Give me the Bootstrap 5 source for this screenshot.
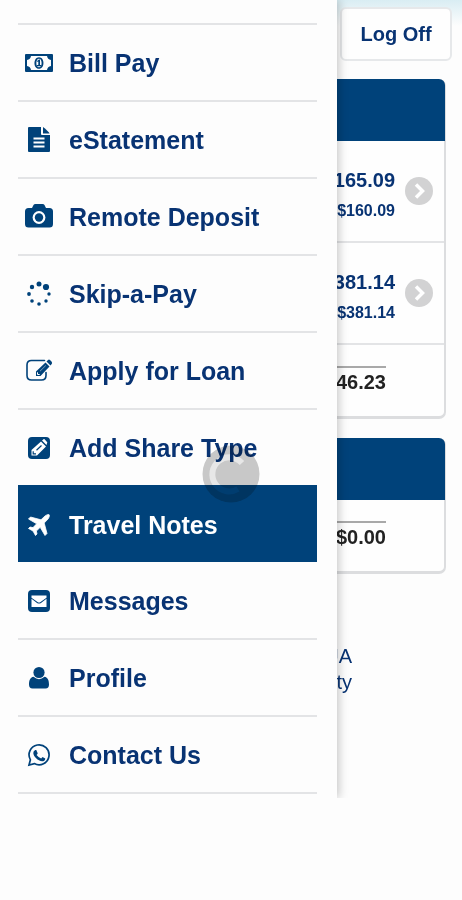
<!DOCTYPE html>
<html lang="en">
<head>
<meta charset="utf-8">
<meta name="viewport" content="width=device-width, initial-scale=1">
<title>Mobile Banking Menu</title>
<link rel="stylesheet" href="https://cdn.jsdelivr.net/npm/bootstrap@5.3.0/dist/css/bootstrap.min.css">
<style>
:root { --navy: #00427a; --ink: #083373; --line: #e3e4e6; }
body { background: #fdfdfd; color: var(--ink); font-family: "Liberation Sans", Arial, sans-serif; overflow-x: hidden; }
.drawer { width: 73%; z-index: 2; background: #fdfdfd; box-shadow: 2px 0 9px rgba(0,0,0,.22); clip-path: inset(0 -14px 0 0); padding: 23px 20px 4px 18px; }
.menu-link { height: 77px; padding: 0 8px 0 7px; gap: 16px; border-top: 2px solid var(--line); color: var(--ink); font-size: 25px; line-height: 30px; font-weight: 700; text-decoration: none; white-space: nowrap; }
.menu-link svg { width: 28px; height: 28px; flex: none; fill: var(--navy); color: var(--navy); overflow: visible; }
.menu-link.active { background: var(--navy); border-color: var(--navy); color: #fff; }
.menu-link.active svg { fill: #fff; }
.after-active { height: 76px; border-top-color: transparent; }
.menu-end { border-bottom: 2px solid var(--line); }
.account-pane { min-width: 0; background: linear-gradient(#d9edf3, #fdfdfd 26px); }
.logoff { height: 54px; margin: 7px 10px 18px 3px; border: 2px solid #e6e8ea; background: #fefefe; color: var(--ink); font-size: 20px; font-weight: 700; border-radius: 6px; padding: 0; }
.account-card { margin-right: 16px; margin-bottom: 19px; border: 2px solid #dcdddf; border-width: 0 2px 3px 0; border-radius: 0 7px 7px 0; background: #fefefe; }
.card-band { height: 62px; background: var(--navy); border-radius: 0 6px 0 0; margin-right: -1px; }
.account-row { height: 102px; padding-right: 11px; gap: 10px; border-bottom: 2px solid var(--line); color: var(--ink); text-decoration: none; font-weight: 700; }
.account-row svg { width: 28px; height: 28px; flex: none; }
.amounts { padding-top: 8px; }
.balance { font-size: 20px; line-height: 32px; }
.available { font-size: 16px; line-height: 30px; }
.total-area { height: 71px; padding-top: 21px; }
.total { margin-right: 58px; border-top: 2px solid #a9a9a9; color: #222; font-size: 20px; line-height: 28px; font-weight: 700; }
.legal { padding: 50px 110px 0 0; font-size: 20px; line-height: 26px; }
.spinner-disc { width: 58px; height: 58px; left: 50%; top: 474px; transform: translate(-50%, -50%); z-index: 3; pointer-events: none; mix-blend-mode: multiply; }
</style>
<script src="https://cdn.jsdelivr.net/npm/bootstrap@5.3.0/dist/js/bootstrap.bundle.min.js"></script>
</head>
<body>
<div class="d-flex align-items-start position-relative">
  <nav class="drawer position-relative flex-shrink-0" aria-label="Main menu">
    <div class="menu-end d-flex flex-column">
      <a href="#" class="menu-link d-flex align-items-center">
        <svg viewBox="-14 -14 28 28" aria-hidden="true"><path fill-rule="evenodd" d="M-13-9H13Q14-9 14-8V8Q14 9 13 9H-13Q-14 9-14 8V-8Q-14-9-13-9ZM-8-7Q-8.500-3.500-12-3V3Q-8.500 3.500-8 7H8Q8.500 3.500 12 3V-3Q8.500-3.500 8-7Z"/><path fill-rule="evenodd" d="M0-5.800C6-5.800 6 5.800 0 5.800S-6-5.800 0-5.800ZM0-4.300C-3.500-4.300-3.500 4.300 0 4.300S3.500-4.300 0-4.300Z"/><path d="M-2-2 0-3.500H1V2H2V3.300H-2V2H-.7V-1.500L-1.500-1Z"/></svg>Bill Pay</a>
      <a href="#" class="menu-link d-flex align-items-center">
        <svg viewBox="-14 -14 28 28" aria-hidden="true"><path d="M-10-13H2V-6Q2-5 3-5H11V11Q11 12 10 12H-10Q-11 12-11 11V-12Q-11-13-10-13ZM4-13Q5-12.500 6-11.500L10-7.500 10.500-6.500H4Z"/><path d="M-5.500-1.500H5.500M-5.500 2.500H5.500M-5.500 6.500H5.500" stroke="#fff" stroke-width="1.800"/></svg>eStatement</a>
      <a href="#" class="menu-link d-flex align-items-center">
        <svg viewBox="-14 -14 28 28" aria-hidden="true"><path d="M-10.500-9H-7L-5.500-12Q-5-13-3.500-13H3.500Q5-13 5.500-12L7-9H10.500Q14-9 14-5.500V7Q14 10.500 10.500 10.500H-10.500Q-14 10.500-14 7V-5.500Q-14-9-10.500-9Z"/><circle cy=".5" r="6.400" fill="#fff"/><circle cy=".5" r="4.200"/></svg>Remote Deposit</a>
      <a href="#" class="menu-link d-flex align-items-center">
        <svg viewBox="-14 -14 28 28" aria-hidden="true"><circle cy="-10" r="2.500"/><circle cx="7" cy="-7" r="3.100"/><circle cx="-7" cy="-7" r="2.200"/><circle cx="-10" r="1.900"/><circle cx="10" r="1.700"/><circle cx="-7" cy="7" r="1.800"/><circle cx="7" cy="7" r="1.700"/><circle cy="10" r="1.800"/></svg>Skip-a-Pay</a>
      <a href="#" class="menu-link d-flex align-items-center">
        <svg viewBox="-14 -14 28 28" aria-hidden="true"><path d="M5.500-10.500H-7.500Q-12-10.500-12-6V4.500Q-12 9 -7.500 9H2.500Q7 9 7 4.500V1.500" fill="none" stroke="currentColor" stroke-width="1.600" stroke-linecap="round"/><path d="M-3 5V.5L6.500-8.500 10.500-4.500 1.500 5ZM7.500-9.500 9-11Q10-11.800 11-11L12.700-9.200Q13.500-8 12.700-7L11.500-5.500Z"/><path d="M-1.500 1.300V3.500H.7" fill="none" stroke="#fff" stroke-width="1"/><path d="M1 .2 6.800-5.500" stroke="#9db4cc" stroke-width=".8"/></svg>Apply for Loan</a>
      <a href="#" class="menu-link d-flex align-items-center">
        <svg viewBox="-14 -14 28 28" aria-hidden="true"><rect x="-11" y="-11" width="22" height="22" rx="4"/><path fill="#fff" d="M-7.500 7.500V2L2-6.500 7 -1.500-2 7.500ZM3-7.500 4.500-8.800Q5-9.200 5.600-8.700L8-6.100Q8.600-5.500 8-4.800L7.500-3Z"/><path d="M-5.800 3.200V5.800H-3M-2.500 2.300 2.500-2.500" fill="none" stroke="currentColor" stroke-width="1.200"/></svg>Add Share Type</a>
      <a href="#" class="menu-link active d-flex align-items-center" aria-current="page">
        <svg viewBox="-14 -14 28 28" aria-hidden="true"><path d="M9.500-10.500C11-10.500 10.500-8 9-6L5.200-2 8 8.500 6 10.500 1.200 2.300-2.600 6-2 9-3.500 10.500-6 6 -10.500 3.500-9 2-6 2.600-2.300-1.200-10.500-6-8.500-8 2-5.200 6-9Q8-10.500 9.500-10.500Z" stroke="#fff" stroke-width=".8" stroke-linejoin="round"/></svg>Travel Notes</a>
      <a href="#" class="menu-link after-active d-flex align-items-center">
        <svg viewBox="-14 -14 28 28" aria-hidden="true"><rect x="-11" y="-11" width="22" height="22" rx="4"/><path fill="#fff" d="M-7.500-5.500H7.500V-3.300L1.500.9Q0 2-1.500.9L-7.500-3.300ZM-7.500-2.200-2 1.900Q0 3.300 2 1.900L7.500-2.200V6H-7.500Z"/></svg>Messages</a>
      <a href="#" class="menu-link d-flex align-items-center">
        <svg viewBox="-14 -14 28 28" aria-hidden="true"><circle cy="-5.500" r="5.600"/><path d="M-5.500-1.200Q0 3.500 5.500-1.200C9-.8 10 3 10 6.500Q10 10.500 6.500 10.500H-6.500Q-10 10.500-10 6.500C-10 3-9-.8-5.500-1.200Z"/></svg>Profile</a>
      <a href="#" class="menu-link d-flex align-items-center">
        <svg viewBox="-14 -14 28 28" aria-hidden="true"><path d="M-8.600 4.800A10 10 0 1 1-4.700 8.600L-10 10Z" fill="none" stroke="currentColor" stroke-width="1.700"/><path d="M-3.800-5H-2.700L-1.300-1.800Q-1.300-1-2.400-.1 0 3 2.200 3.400L3.500 1.900 6.300 3.500C6.300 5.500 4.600 6.300 3.200 6.300-1 6-5.700 1.300-5.700-2Q-5.700-4-3.800-5Z"/></svg>Contact Us</a>
    </div>
  </nav>

  <main class="account-pane flex-grow-1 d-flex flex-column">
    <button type="button" class="logoff btn">Log Off</button>
    <section class="account-card">
      <div class="card-band"></div>
      <a href="#" class="account-row d-flex align-items-center justify-content-end">
        <span class="amounts d-flex flex-column align-items-end"><span class="balance">165.09</span><span class="available">$160.09</span></span>
        <svg viewBox="0 0 28 28" aria-hidden="true"><circle cx="14" cy="14" r="14" fill="#d2d2d3"/><path d="M11 7.500 17.500 14 11 20.500" fill="none" stroke="#fff" stroke-width="3.500"/></svg>
      </a>
      <a href="#" class="account-row d-flex align-items-center justify-content-end">
        <span class="amounts d-flex flex-column align-items-end"><span class="balance">381.14</span><span class="available">$381.14</span></span>
        <svg viewBox="0 0 28 28" aria-hidden="true"><circle cx="14" cy="14" r="14" fill="#d2d2d3"/><path d="M11 7.500 17.500 14 11 20.500" fill="none" stroke="#fff" stroke-width="3.500"/></svg>
      </a>
      <div class="total-area d-flex justify-content-end"><div class="total align-self-start">46.23</div></div>
    </section>
    <section class="account-card">
      <div class="card-band"></div>
      <div class="total-area d-flex justify-content-end"><div class="total align-self-start">$0.00</div></div>
    </section>
    <footer class="legal d-flex flex-column align-items-end"><span>UA</span><span>ty</span></footer>
  </main>

  <svg class="spinner-disc position-absolute" viewBox="0 0 58 58" role="img" aria-label="Loading">
    <circle cx="29" cy="29" r="28.500" fill="#cacaca"/>
    <path d="M40 18A17 17 0 1 0 36 44" fill="none" stroke="#e9e9e9" stroke-width="6"/>
  </svg>
</div>
</body>
</html>
